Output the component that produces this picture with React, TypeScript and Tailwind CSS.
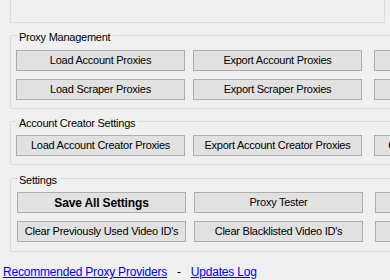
import React from 'react';

type Btn = { label: string; bold?: boolean };

const groups: {
  title: string;
  rows: Btn[][];
  wrap: string;
  legend: string;
}[] = [
  {
    title: 'Proxy Management',
    rows: [
      [{ label: 'Load Account Proxies' }, { label: 'Export Account Proxies' }, { label: '' }],
      [{ label: 'Load Scraper Proxies' }, { label: 'Export Scraper Proxies' }, { label: '' }],
    ],
    wrap: 'mt-[4px] pl-[5px] pt-[6px] pb-[8px]',
    legend: 'pl-[3px]',
  },
  {
    title: 'Account Creator Settings',
    rows: [
      [
        { label: 'Load Account Creator Proxies' },
        { label: 'Export Account Creator Proxies' },
        { label: 'Clear Account Creator Proxies' },
      ],
    ],
    wrap: 'mt-[4px] pl-[5px] pt-[5px] pb-[8px]',
    legend: 'pl-[3px]',
  },
  {
    title: 'Settings',
    rows: [
      [{ label: 'Save All Settings', bold: true }, { label: 'Proxy Tester' }, { label: '' }],
      [{ label: "Clear Previously Used Video ID's" }, { label: "Clear Blacklisted Video ID's" }, { label: '' }],
    ],
    wrap: 'mt-[5px] pl-[6px] pt-[5px] pb-[9px]',
    legend: 'pl-[2px]',
  },
];

function WinButton({ label, bold }: Btn) {
  return (
    <button
      className={`h-[21px] w-[169px] flex items-center justify-center whitespace-nowrap overflow-hidden bg-[#e1e1e1] border border-[#adadad] text-black ${
        bold ? 'text-[12px] font-bold tracking-[-0.15px]' : 'text-[11px] tracking-[-0.25px]'
      }`}
    >
      {label}
    </button>
  );
}

export default function App() {
  return (
    <div className="w-[390px] h-[280px] overflow-hidden bg-[#f0f0f0] font-['Liberation_Sans',Arial,sans-serif] text-black">
      {/* bottom of the box above */}
      <div className="ml-[10px] w-[375px] h-[23px] border-x border-b border-[#dcdcdc]" />

      {groups.map((g) => (
        <fieldset
          key={g.title}
          className={`ml-[10px] w-[560px] border border-[#dcdcdc] rounded-[2px] pr-[5px] ${g.wrap}`}
        >
          <legend className={`pt-[4px] pr-[3px] text-[11px] leading-[13px] tracking-[-0.25px] ${g.legend}`}>
            {g.title}
          </legend>
          <div className="flex flex-col gap-[8px]">
            {g.rows.map((row, i) => (
              <div key={i} className="flex">
                <WinButton {...row[0]} />
                <div className="ml-[8px]">
                  <WinButton {...row[1]} />
                </div>
                <div className="ml-[12px]">
                  <WinButton {...row[2]} />
                </div>
              </div>
            ))}
          </div>
        </fieldset>
      ))}

      <div className="mt-[13px] pl-[3px] flex gap-[10px] text-[12px] leading-[14px] tracking-[-0.2px] whitespace-nowrap">
        <a href="#" className="text-[#0000ff] underline">
          Recommended Proxy Providers
        </a>
        <span>-</span>
        <a href="#" className="text-[#0000ff] underline">
          Updates Log
        </a>
      </div>
    </div>
  );
}
